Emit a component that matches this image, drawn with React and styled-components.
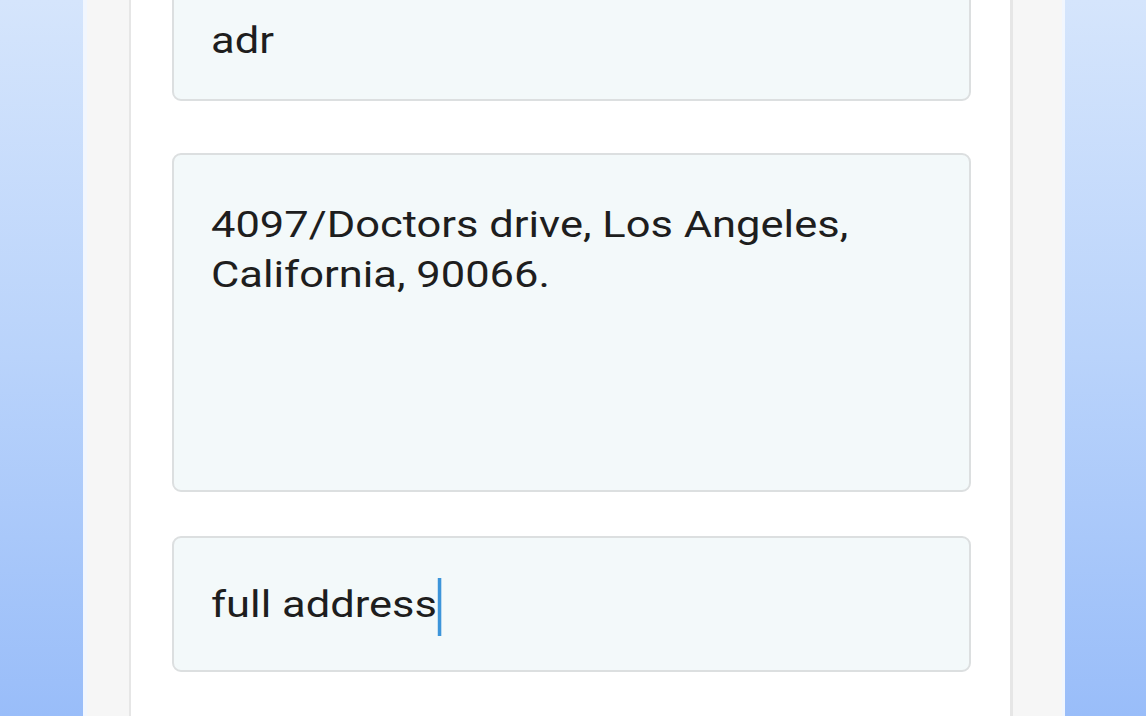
import React from "react";
import styled, { createGlobalStyle } from "styled-components";

const Global = createGlobalStyle`
  html, body { margin: 0; padding: 0; }
  body { font-family: Roboto, "Noto Sans", sans-serif; }
  #root { height: 716px; }
`;

const Page = styled.div`
  height: 716px;
  width: 1146px;
  overflow: hidden;
  display: flex;
  background: linear-gradient(180deg, #d5e5fc 0%, #b9d3fb 50%, #99bdf9 100%);
`;

const Gutter = styled.div`
  flex: 0 0 ${(p) => p.$w}px;
`;

const Frame = styled.div`
  flex: 0 0 982px;
  display: flex;
  background: #f6f6f6;
  border-left: 4px solid #f1f6fe;
  border-right: 3px solid #f1f6fe;
  box-sizing: border-box;
  padding: 0 49px 0 42px;
`;

const Panel = styled.div`
  flex: 1;
  background: #ffffff;
  border-left: 2px solid #e6e6e6;
  border-right: 3px solid #e6e6e6;
  padding: 0 39px 0 41px;
  overflow: hidden;
`;

const Form = styled.div`
  display: flex;
  flex-direction: column;
  margin-top: -25px;
`;

const Field = styled.div`
  box-sizing: border-box;
  height: ${(p) => p.$h}px;
  margin-top: ${(p) => p.$mt || 0}px;
  background: #f3f9fa;
  border: 2px solid #dcdfe0;
  border-radius: 9px;
  padding: ${(p) => (p.$multi ? "45px 30px 0 37px" : "6px 30px 0 37px")};
  display: flex;
  align-items: ${(p) => (p.$multi ? "flex-start" : "center")};
  font-size: 37px;
  line-height: 50px;
  color: #1e1e1e;
`;

const Text = styled.span`
  display: inline-block;
  white-space: nowrap;
  transform: scaleX(1.175);
  transform-origin: left center;
`;

const Caret = styled.span`
  display: inline-block;
  width: 3px;
  height: 58px;
  margin-left: 1px;
  background: #3d95da;
  vertical-align: middle;
`;

export default function App() {
  return (
    <>
      <Global />
      <Page>
        <Gutter $w={83} />
        <Frame>
          <Panel>
            <Form>
              <Field $h={126}>
                <Text>adr</Text>
              </Field>
              <Field $h={339} $mt={52} $multi>
                <Text>
                  4097/Doctors drive, Los Angeles,
                  <br />
                  California, 90066.
                </Text>
              </Field>
              <Field $h={136} $mt={44}>
                <Text>
                  full address
                  <Caret />
                </Text>
              </Field>
            </Form>
          </Panel>
        </Frame>
        <Gutter $w={81} />
      </Page>
    </>
  );
}
